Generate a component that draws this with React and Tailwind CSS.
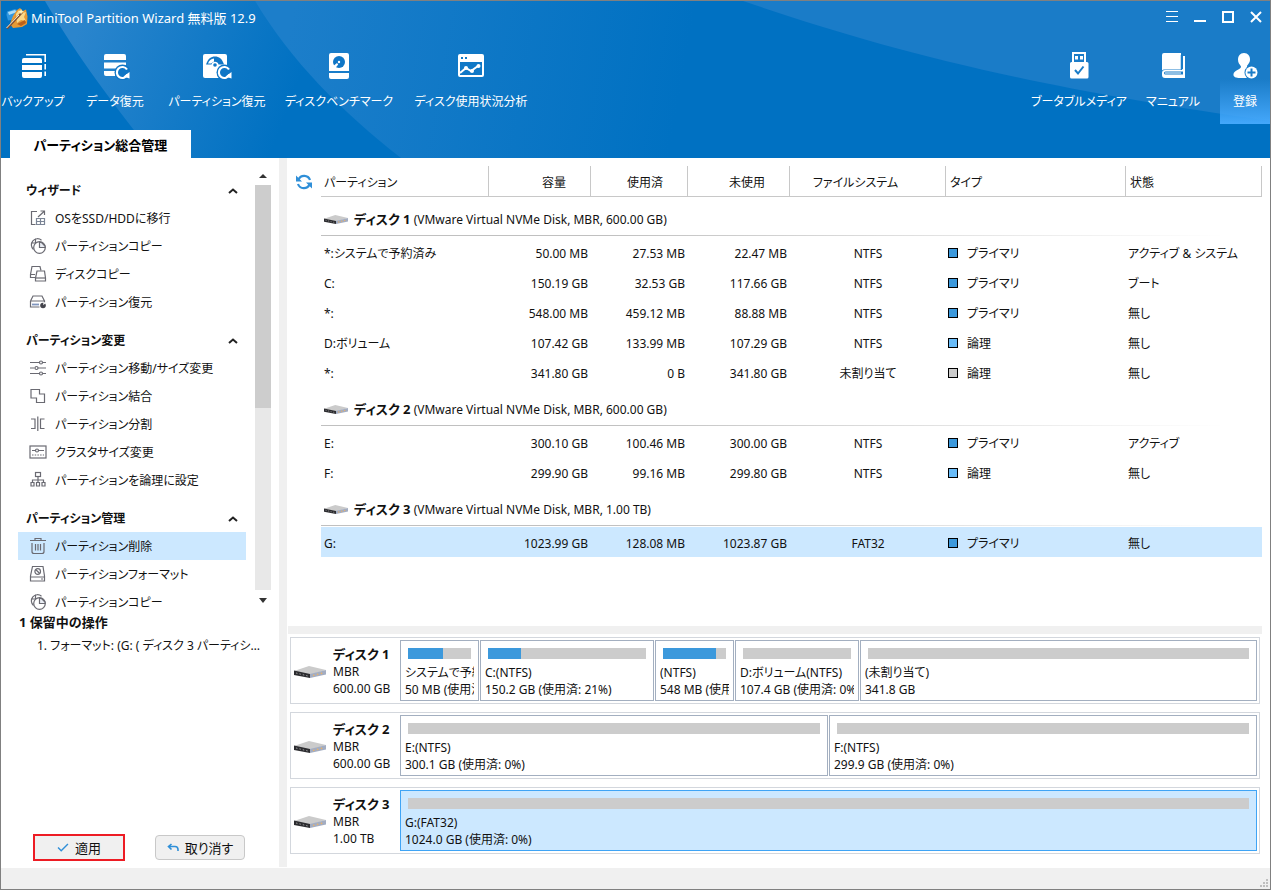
import React, { useState } from 'react';

const PRIMARY = 'bg-[#3c99dc]';
const LOGICAL = 'bg-[#69bcf8]';
const UNALLOCATED = 'bg-[#cccccc]';

const svgProps = { width: 18, height: 18, viewBox: '0 0 18 18', fill: 'none', stroke: '#6a6a72', strokeWidth: 1.2 };

const icons = {
  migrate: (
    <svg {...svgProps}>
      <path d="M8 2.500H2.500v13h4M9 8l6-5.500M11.500 2H15.500v4" />
      <path d="M7.500 9.500h8v6h-8zM11.500 9.500v6M7.500 12.500h8" stroke="#7b8596" />
    </svg>
  ),
  copyPartition: (
    <svg {...svgProps}>
      <path d="M4.500 12.500A6 6 0 1 1 12.500 3.200M6.500 1.500v4.500H2" />
      <circle cx="10.500" cy="10.500" r="5.800" fill="#fff" />
      <path d="M10.500 5.500v5h5.500V9l-3.500-3.500z" fill="#e9edf4" />
    </svg>
  ),
  copyDisk: (
    <svg {...svgProps}>
      <path d="M6 12.500H1.500v-3l1.500-8h8l1 4M1.500 9.500H6" />
      <path d="M8 6h7.500l1 7v3h-10v-3z" />
      <path d="M6.500 13h10" />
    </svg>
  ),
  recover: (
    <svg {...svgProps}>
      <path d="M1.500 8 4 3h9l2.500 5M1.500 8h14v2M1.500 8v6h9" />
      <path d="M3 11.500h7" stroke="#7f95bd" strokeWidth="1.800" />
      <circle cx="14" cy="12.500" r="2.800" fill="#44444c" stroke="none" />
      <path d="M14.300 12.200v-3h3z" fill="#fff" stroke="none" />
    </svg>
  ),
  resize: (
    <svg {...svgProps}>
      <path d="M1 3.500h9.500M13.500 3.500H17M1 9h4.500M9 9h8M1 14.500h9.500M13.500 14.500H17" />
      <circle cx="12" cy="3.500" r="1.500" />
      <circle cx="7.500" cy="9" r="1.500" />
      <circle cx="12" cy="14.500" r="1.500" />
    </svg>
  ),
  merge: (
    <svg {...svgProps}>
      <path d="M2 2.500h8.500V7H15.500v8.500H7.500V11H2z" />
    </svg>
  ),
  split: (
    <svg {...svgProps}>
      <path d="M2 4h4v9.500H2M15.500 4h-4v9.500h4M8.800 1.500v14.500" />
    </svg>
  ),
  cluster: (
    <svg {...svgProps}>
      <rect x="1" y="3" width="16" height="12" />
      <path d="M3 7.500h3M10 7.500h5" />
      <circle cx="8" cy="7.500" r="1.500" />
      <path d="M3 12h12" strokeDasharray="1.500 1.200" />
    </svg>
  ),
  logical: (
    <svg {...svgProps}>
      <rect x="6.500" y="1.500" width="5" height="4" />
      <path d="M9 5.500v4M3.500 11.500v-2.500h11v2.500M9 9v2.500" />
      <path d="M2 11.500h3v3.500H2zM7.500 11.500h3v3.500h-3zM13 11.500h3v3.500h-3z" />
    </svg>
  ),
  trash: (
    <svg {...svgProps}>
      <path d="M1 3.500h16M6 3.500v-2h6v2M3 6v8.500a2 2 0 0 0 2 2h8a2 2 0 0 0 2-2V6M6.500 7v6.500M9 7v6.500M11.500 7v6.500" />
    </svg>
  ),
  format: (
    <svg {...svgProps}>
      <path d="M3.500 1.500h10.500l1.500 9.500v5H1.500v-5zM1.500 12h14M12 14h2" />
      <circle cx="8.700" cy="6.500" r="2.800" />
      <path d="m6.700 4.500 4 4" />
    </svg>
  ),
};

const sections = [
  {
    title: 'ウィザード',
    items: [
      ['migrate', 'OSをSSD/HDDに移行'],
      ['copyPartition', 'パーティションコピー'],
      ['copyDisk', 'ディスクコピー'],
      ['recover', 'パーティション復元'],
    ],
  },
  {
    title: 'パーティション変更',
    items: [
      ['resize', 'パーティション移動/サイズ変更'],
      ['merge', 'パーティション結合'],
      ['split', 'パーティション分割'],
      ['cluster', 'クラスタサイズ変更'],
      ['logical', 'パーティションを論理に設定'],
    ],
  },
  {
    title: 'パーティション管理',
    items: [
      ['trash', 'パーティション削除'],
      ['format', 'パーティションフォーマット'],
      ['copyPartition', 'パーティションコピー'],
    ],
  },
];

const disks = [
  {
    name: 'ディスク 1',
    info: '(VMware Virtual NVMe Disk, MBR, 600.00 GB)',
    size: '600.00 GB',
    rows: [
      ['*:システムで予約済み', '50.00 MB', '27.53 MB', '22.47 MB', 'NTFS', PRIMARY, 'プライマリ', 'アクティブ & システム'],
      ['C:', '150.19 GB', '32.53 GB', '117.66 GB', 'NTFS', PRIMARY, 'プライマリ', 'ブート'],
      ['*:', '548.00 MB', '459.12 MB', '88.88 MB', 'NTFS', PRIMARY, 'プライマリ', '無し'],
      ['D:ボリューム', '107.42 GB', '133.99 MB', '107.29 GB', 'NTFS', LOGICAL, '論理', '無し'],
      ['*:', '341.80 GB', '0 B', '341.80 GB', '未割り当て', UNALLOCATED, '論理', '無し'],
    ],
    blocks: [
      { weight: 79, used: 55, label: 'システムで予約済み(NTFS)', detail: '50 MB (使用済: 55%)' },
      { weight: 174, used: 21, label: 'C:(NTFS)', detail: '150.2 GB (使用済: 21%)' },
      { weight: 79, used: 84, label: '(NTFS)', detail: '548 MB (使用済: 84%)' },
      { weight: 124, used: 0, label: 'D:ボリューム(NTFS)', detail: '107.4 GB (使用済: 0%)' },
      { weight: 397, used: 0, label: '(未割り当て)', detail: '341.8 GB' },
    ],
  },
  {
    name: 'ディスク 2',
    info: '(VMware Virtual NVMe Disk, MBR, 600.00 GB)',
    size: '600.00 GB',
    rows: [
      ['E:', '300.10 GB', '100.46 MB', '300.00 GB', 'NTFS', PRIMARY, 'プライマリ', 'アクティブ'],
      ['F:', '299.90 GB', '99.16 MB', '299.80 GB', 'NTFS', LOGICAL, '論理', '無し'],
    ],
    blocks: [
      { weight: 1, used: 0, label: 'E:(NTFS)', detail: '300.1 GB (使用済: 0%)' },
      { weight: 1, used: 0, label: 'F:(NTFS)', detail: '299.9 GB (使用済: 0%)' },
    ],
  },
  {
    name: 'ディスク 3',
    info: '(VMware Virtual NVMe Disk, MBR, 1.00 TB)',
    size: '1.00 TB',
    rows: [['G:', '1023.99 GB', '128.08 MB', '1023.87 GB', 'FAT32', PRIMARY, 'プライマリ', '無し']],
    blocks: [{ weight: 1, used: 0, label: 'G:(FAT32)', detail: '1024.0 GB (使用済: 0%)', selected: true }],
  },
];

const AppLogo = () => (
  <svg width="24" height="24" viewBox="0 0 24 24" className="shrink-0">
    <path d="M2 5.500 10 3l4 2-2 8-9 1.500L1.500 9z" fill="#2f96e0" />
    <path d="M3 6l7-2 2 2-8 3z" fill="#a9dcf7" />
    <path d="M8 10 12 4l3-2 3 3 3-1.500 1.500 7L22 18l-5 3-9 1-3-4z" fill="#e79a35" />
    <path d="m11 8 3-4 3 3 4-1-2 5 2 4-5-1-4 3z" fill="#fbd98a" />
    <path d="m12 18 8-4 1 3-5 3z" fill="#b9601c" />
    <path d="M2 22.500 17 6.500" stroke="#7d4a2a" strokeWidth="2" />
    <path d="M1.500 22 14 9" stroke="#f4ead8" strokeWidth="1" />
    <path d="m16 3 1 2 2 .5-2 1-1 2-.8-2-2-.8 2-.7z" fill="#fff7c4" />
  </svg>
);

const DriveIcon = ({ width = 32, height = 14 }) => (
  <svg width={width} height={height} viewBox="0 0 32 14" className="shrink-0">
    <path d="M0 6 15 1l17 4-16 5z" fill="#cbcbcb" />
    <path d="M0 5.500l16 3.500v4L0 10z" fill="#2c2c30" />
    <path d="M16 9l16-4v4.500l-16 3.500z" fill="#a3adc2" />
    <path d="M2 8l12 3" stroke="#9a9a9a" strokeWidth="1" strokeDasharray="1.500 2" />
    <path d="M19 10.500l10-2.500" stroke="#e8b26a" strokeWidth="1.500" strokeDasharray="1.500 2.500" />
  </svg>
);

const RefreshIcon = () => (
  <svg width="18" height="18" viewBox="0 0 18 18" fill="none">
    <path d="M3.500 6.500A6.200 6.200 0 0 1 15 7M14.500 11.500A6.200 6.200 0 0 1 3 11" stroke="#2f8fd8" strokeWidth="2.200" />
    <path d="M1 2.500v6h6zM17 15.500v-6h-6z" fill="#2f8fd8" />
  </svg>
);

const BackupIcon = () => (
  <svg width="28" height="28" viewBox="0 0 28 28" fill="#fff">
    <path d="M5 6h16a2 2 0 0 1 2 2v3H3V8a2 2 0 0 1 2-2zM3 13h20v5H3zM3 20h20v4a2 2 0 0 1-2 2H5a2 2 0 0 1-2-2z" />
    <path d="M7 2.800h19.200V10M26.200 12v5.500M26.200 19.500V24" fill="none" stroke="#fff" strokeWidth="1.600" />
  </svg>
);

const ReloadArrow = () => (
  <>
    <circle cx="22.500" cy="20.500" r="8" fill="#0f76c6" />
    <path d="M27 17.500a5.500 5.500 0 1 0 .5 5" fill="none" stroke="#fff" strokeWidth="2.200" />
    <path d="M29.500 20v6.500l-6-2z" fill="#fff" />
  </>
);

const DataRecoveryIcon = () => (
  <svg width="30" height="28" viewBox="0 0 30 28" fill="#fff">
    <path d="M6 2h18a2 2 0 0 1 2 2v4H4V4a2 2 0 0 1 2-2zM4 10.500h22v6H4zM4 19h22v5H6a2 2 0 0 1-2-2z" />
    <ReloadArrow />
  </svg>
);

const PartitionRecoveryIcon = () => (
  <svg width="30" height="28" viewBox="0 0 30 28" fill="#fff">
    <path d="M3 2h20a2 2 0 0 1 2 2v22H3a2 2 0 0 1-2-2V4a2 2 0 0 1 2-2z" />
    <path d="M4 12.500C6 6.500 9 4.500 13 4.500s7 2 9 8h-5.500a3.600 3.600 0 0 0-7 0z" fill="#0f76c6" />
    <path d="m6 11.500c1-3 3-4.500 6-5v3l-3 2z" />
    <circle cx="13" cy="13" r="1.800" fill="#0f76c6" />
    <ReloadArrow />
  </svg>
);

const BenchmarkIcon = () => (
  <svg width="28" height="28" viewBox="0 0 28 28" fill="#fff">
    <path d="M6 1h16a2 2 0 0 1 2 2v16H4V3a2 2 0 0 1 2-2zM4 21h20v4a2 2 0 0 1-2 2H6a2 2 0 0 1-2-2z" />
    <circle cx="14" cy="10" r="6" fill="#0f76c6" />
    <circle cx="14" cy="10" r="1.200" />
    <path d="m7 15 5-4 1.200 1.500-3.200 4z" />
  </svg>
);

const UsageIcon = () => (
  <svg width="28" height="28" viewBox="0 0 28 28">
    <path fill="#fff" fillRule="evenodd" d="M3 2h22a2 2 0 0 1 2 2v19a2 2 0 0 1-2 2H3a2 2 0 0 1-2-2V4a2 2 0 0 1 2-2zm1 3v2h2V5zm4 0v2h2V5zM3 10v13h22V10z" />
    <path d="m3 21 6-5 5 3 7-5" fill="none" stroke="#fff" strokeWidth="2" />
    <circle cx="9" cy="16" r="2" fill="#fff" />
    <circle cx="15" cy="19" r="2" fill="#fff" />
    <circle cx="21.500" cy="14" r="2" fill="#fff" />
  </svg>
);

const UsbIcon = () => (
  <svg width="28" height="28" viewBox="0 0 28 28">
    <path fill="#fff" fillRule="evenodd" d="M7 0h14v10h1a1.500 1.500 0 0 1 1.500 1.500V25a1.500 1.500 0 0 1-1.500 1.500H6.500A1.500 1.500 0 0 1 5 25V11.500A1.500 1.500 0 0 1 6.500 10H7zm2 2v8h10V2zm1 2h3v3.500h-3zm5 0h3v3.500h-3z" />
    <path d="m10 18 3 3.500 5.500-7" fill="none" stroke="#1a7cc8" strokeWidth="2" />
  </svg>
);

const ManualIcon = () => (
  <svg width="28" height="28" viewBox="0 0 28 28">
    <path fill="#fff" d="M5 1h17v16.500H5a3 3 0 0 0-2 1V3a2 2 0 0 1 2-2z" />
    <path fill="#fff" fillRule="evenodd" d="M24 4h2v22H6a3 3 0 0 1-3-3v-2a3 3 0 0 1 3-3h16v-1h2zM6.500 19.500a1.500 1.500 0 0 0 0 3H24v-3z" />
    <path d="M6 21h16" stroke="#fff" strokeWidth="1" />
    <path d="M22.500 3v15" stroke="#1a7cc8" strokeWidth="1.500" />
  </svg>
);

const RegisterIcon = () => (
  <svg width="28" height="28" viewBox="0 0 28 28">
    <path fill="#fff" d="M13 1c4 0 6 3 6 6.500S17 12 16 14c0 3 3 3.500 5 5v7H9c-4 0-7-1-6.500-4C3 18 10 18 10 14.500 8.500 12 7 11 7 7.500S9 1 13 1z" />
    <circle cx="20.500" cy="20.500" r="7" fill="#1a7cc8" />
    <circle cx="20.500" cy="20.500" r="6" fill="#fff" />
    <path d="M16.500 20.500h8M20.500 16.500v8" stroke="#1a7cc8" strokeWidth="2" />
  </svg>
);

const HeaderBackdrop = () => (
  <svg className="absolute inset-0 h-full w-full" viewBox="0 0 1269 157" preserveAspectRatio="none">
    <defs>
      <linearGradient id="beamA" gradientUnits="userSpaceOnUse" x1="80" y1="20" x2="290" y2="100">
        <stop offset="0" stopColor="#2a85cd" />
        <stop offset="1" stopColor="#0071c2" />
      </linearGradient>
      <linearGradient id="beamB" gradientUnits="userSpaceOnUse" x1="290" y1="20" x2="680" y2="90">
        <stop offset="0" stopColor="#1c7eca" />
        <stop offset="1" stopColor="#0071c2" />
      </linearGradient>
    </defs>
    <path d="M44 0C70 45 100 88 155 157H400C340 110 290 60 254 0z" fill="url(#beamA)" />
    <path d="M254 0C290 60 340 110 400 157H760V0z" fill="url(#beamB)" />
    <path d="M742 0C880 47 1020 85 1269 120V0z" fill="#1a7cc8" />
  </svg>
);

const ToolButton = ({ icon, label, width }) => (
  <button className={`flex h-[75px] flex-col items-center gap-3 whitespace-nowrap pt-[3px] text-white ${width}`}>
    {icon}
    <span className="leading-5">{label}</span>
  </button>
);

const Header = () => (
  <header className="relative flex h-[157px] shrink-0 flex-col justify-between overflow-hidden bg-[#0071c2] text-white">
    <HeaderBackdrop />
    <div className="relative flex h-8 items-center justify-between pl-1">
      <h1 className="flex items-center gap-0.5 pt-0.5 text-[13px]">
        <AppLogo />
        MiniTool Partition Wizard 無料版 12.9
      </h1>
      <div className="flex">
        <button aria-label="メニュー" className="grid h-7 w-7 place-items-center">
          <svg width="12" height="12" viewBox="0 0 12 12" stroke="#fff"><path d="M0 .5h12M0 5.500h12M0 10.500h12" /></svg>
        </button>
        <button aria-label="最小化" className="grid h-7 w-7 place-items-center">
          <svg width="12" height="12" viewBox="0 0 12 12" stroke="#fff" strokeWidth="2"><path d="M0 10h12" /></svg>
        </button>
        <button aria-label="最大化" className="grid h-7 w-7 place-items-center">
          <svg width="12" height="12" viewBox="0 0 12 12" fill="none" stroke="#fff" strokeWidth="2"><path d="M1 1h10v10H1z" /></svg>
        </button>
        <button aria-label="閉じる" className="grid h-7 w-7 place-items-center">
          <svg width="12" height="12" viewBox="0 0 12 12" stroke="#fff" strokeWidth="2"><path d="m1 1 10 10M11 1 1 11" /></svg>
        </button>
      </div>
    </div>
    <div className="relative flex flex-1 items-start justify-between pt-4">
      <div className="flex">
        <ToolButton icon={<BackupIcon />} label="バックアップ" width="w-16" />
        <ToolButton icon={<DataRecoveryIcon />} label="データ復元" width="w-[100px]" />
        <ToolButton icon={<PartitionRecoveryIcon />} label="パーティション復元" width="w-[104px]" />
        <ToolButton icon={<BenchmarkIcon />} label="ディスクベンチマーク" width="w-[140px]" />
        <ToolButton icon={<UsageIcon />} label="ディスク使用状況分析" width="w-[124px]" />
      </div>
      <div className="flex">
        <ToolButton icon={<UsbIcon />} label="ブータブルメディア" width="w-[94px]" />
        <ToolButton icon={<ManualIcon />} label="マニュアル" width="w-[94px]" />
        <ToolButton
          icon={<RegisterIcon />}
          label="登録"
          width="w-[50px] bg-linear-to-b from-transparent from-40% to-[#45a8fb]"
        />
      </div>
    </div>
    <div className="relative flex pl-[9px]">
      <button className="h-7 w-[181px] bg-white pt-0.5 text-[13px] font-bold leading-5 text-black">パーティション総合管理</button>
    </div>
  </header>
);

const Sidebar = ({ selected, onSelect }) => (
  <aside className="flex w-[278px] shrink-0 flex-col">
    <div className="flex min-h-0 flex-1 pl-[17px] pr-2 pt-2.5">
      <nav className="min-w-0 flex-1 overflow-hidden pr-[9px] pt-2">
        {sections.map((section) => (
          <div key={section.title} className="mb-[10px]">
            <button className="flex h-7 w-full items-center justify-between pl-2 pr-2 pt-0.5 font-bold">
              {section.title}
              <svg width="10" height="6" viewBox="0 0 10 6" fill="none" stroke="#222" strokeWidth="2"><path d="m1 5 4-3.500L9 5" /></svg>
            </button>
            <ul>
              {section.items.map(([icon, label]) => {
                const key = section.title + label;
                return (
                  <li key={key}>
                    <button
                      onClick={() => onSelect(key)}
                      className={`flex h-7 w-full items-center gap-2 whitespace-nowrap pl-[11px] ${selected === key ? 'bg-[#cce8ff]' : ''}`}
                    >
                      {icons[icon]}
                      <span className="pt-0.5">{label}</span>
                    </button>
                  </li>
                );
              })}
            </ul>
          </div>
        ))}
      </nav>
      <div className="flex w-4 shrink-0 flex-col">
        <span className="grid h-[17px] place-items-center">
          <svg width="8" height="5" viewBox="0 0 8 5"><path d="M4 0 8 4H0z" fill="#333" /></svg>
        </span>
        <div className="flex-1 bg-[#e8e8e8]">
          <div className="h-[55%] bg-[#cdcdcd]" />
        </div>
        <span className="grid h-5 place-items-center">
          <svg width="8" height="5" viewBox="0 0 8 5"><path d="M4 5 8 0H0z" fill="#333" /></svg>
        </span>
      </div>
    </div>
    <div className="flex h-[258px] shrink-0 flex-col justify-between pb-[7px]">
      <div className="pl-[18px] pr-4">
        <h2 className="text-[13px] font-bold leading-6">1 保留中の操作</h2>
        <p className="truncate pl-[18px] leading-6">1. フォーマット: (G: ( ディスク 3 パーティション 1 ))</p>
      </div>
      <div className="flex items-center gap-[30px] pl-8">
        <button className="flex h-[27px] w-[92px] items-center justify-center gap-1.5 border-2 border-[#ed1c24] bg-[#f0f0f0] text-[13px]">
          <svg width="12" height="9" viewBox="0 0 13 10" fill="none" stroke="#2f8fd8" strokeWidth="1.600"><path d="m1 5 3.500 3.500L12 1" /></svg>
          適用
        </button>
        <button className="flex h-[25px] w-[90px] items-center justify-center gap-1.5 rounded-sm border border-[#c8c8c8] bg-[#f0f0f0] text-[13px]">
          <svg width="12" height="10" viewBox="0 0 12 10" fill="none" stroke="#2f8fd8" strokeWidth="1.600"><path d="M4.500 1 1.500 3.500l3 3M1.500 3.500H8a3 3 0 0 1 3 3V8" /></svg>
          取り消す
        </button>
      </div>
    </div>
  </aside>
);

const PartitionTable = () => (
  <div className="flex min-h-0 flex-1 overflow-hidden pr-2 pt-2">
    <button aria-label="更新" className="grid h-[31px] w-[34px] shrink-0 place-items-center">
      <RefreshIcon />
    </button>
    <div className="min-w-0 flex-1">
      <table className="w-full table-fixed border-separate border-spacing-0">
        <colgroup>
          <col className="w-[168px]" />
          <col className="w-[102px]" />
          <col className="w-[97px]" />
          <col className="w-[102px]" />
          <col className="w-[156px]" />
          <col className="w-[180px]" />
          <col />
        </colgroup>
        <thead>
          <tr className="h-[31px] [&>th]:border-b [&>th]:border-r [&>th]:border-[#c8c8c8] [&>th]:p-0 [&>th]:pt-[3px] [&>th]:font-normal">
            <th className="text-left"><span className="pl-[3px]">パーティション</span></th>
            <th className="text-right"><span className="pr-6">容量</span></th>
            <th className="text-right"><span className="pr-6">使用済</span></th>
            <th className="text-right"><span className="pr-6">未使用</span></th>
            <th className="text-center"><span className="pr-6">ファイルシステム</span></th>
            <th className="text-left"><span className="pl-1">タイプ</span></th>
            <th className="text-left"><span className="pl-1">状態</span></th>
          </tr>
        </thead>
        {disks.map((disk) => (
          <tbody key={disk.name}>
            <tr>
              <td colSpan={7} className="p-0 pb-px">
                <div className="flex h-[38px] items-center gap-1.5 pl-[3px] pt-1.5">
                  <DriveIcon width={24} height={11} />
                  <span>
                    <b className="text-[13px]">{disk.name}</b> {disk.info}
                  </span>
                </div>
                <div className="h-px bg-linear-to-r from-[#c0c0c0] from-30% to-transparent to-[96%]" />
              </td>
            </tr>
            {disk.rows.map(([name, size, used, free, fs, color, type, status], index) => (
              <tr key={index} className={`h-[30px] [&>td]:whitespace-nowrap [&>td]:p-0 [&>td]:pt-[3px] ${name === 'G:' ? 'bg-[#cce8ff]' : ''}`}>
                <td><span className="pl-[3px]">{name}</span></td>
                <td className="text-right"><span className="pr-[3px]">{size}</span></td>
                <td className="text-right"><span className="pr-[3px]">{used}</span></td>
                <td className="text-right"><span className="pr-[3px]">{free}</span></td>
                <td className="text-center">{fs}</td>
                <td>
                  <span className="flex items-center gap-[9px] pl-0.5">
                    <span className={`mb-0.5 h-2.5 w-2.5 border border-black ${color}`} />
                    {type}
                  </span>
                </td>
                <td><span className="pl-0.5">{status}</span></td>
              </tr>
            ))}
          </tbody>
        ))}
      </table>
    </div>
  </div>
);

const DiskMap = () => (
  <div className="flex shrink-0 flex-col gap-2 pb-[14px] pl-[3px] pr-[10px] pt-[3px]">
    {disks.map((disk) => (
      <div key={disk.name} className="flex h-[67px] border border-[#d3d7dd] p-0.5 leading-[17px]">
        <div className="flex w-[107px] shrink-0 items-center gap-[7px] pl-px pt-0.5">
          <DriveIcon />
          <div className="whitespace-nowrap">
            <b className="block text-[13px]">{disk.name}</b>
            <span className="block">MBR</span>
            <span className="block">{disk.size}</span>
          </div>
        </div>
        <div
          className="grid min-w-0 flex-1 gap-px"
          style={{ gridTemplateColumns: disk.blocks.map((block) => `minmax(0, ${block.weight}fr)`).join(' ') }}
        >
          {disk.blocks.map((block) => (
            <div
              key={block.label}
              className={`border px-1 pt-[7px] ${block.selected ? 'border-[#3fa4f5] bg-[#cce8ff]' : 'border-[#a3afc0] bg-white'}`}
            >
              <div className="mx-[3px] h-[11px] bg-[#cccccc]">
                <div className="h-full bg-[#3c99dc]" style={{ width: `${block.used}%` }} />
              </div>
              <div className="mt-[5px] overflow-hidden whitespace-nowrap">
                <span className="block">{block.label}</span>
                <span className="block">{block.detail}</span>
              </div>
            </div>
          ))}
        </div>
      </div>
    ))}
  </div>
);

export default function App() {
  const [selected, setSelected] = useState('パーティション管理パーティション削除');

  return (
    <div className="flex h-screen flex-col overflow-hidden border border-[#808080] bg-white font-['Noto_Sans','Noto_Sans_CJK_JP',sans-serif] text-[12px] leading-5 text-[#111] [font-feature-settings:'palt']">
      <Header />
      <div className="flex min-h-0 flex-1">
        <Sidebar selected={selected} onSelect={setSelected} />
        <div className="mb-px w-2 shrink-0 bg-[#f0f0f0]" />
        <main className="flex min-w-0 flex-1 flex-col">
          <PartitionTable />
          <div className="ml-px mr-2 h-2 shrink-0 bg-[#f0f0f0]" />
          <DiskMap />
        </main>
      </div>
      <footer className="flex h-[21px] shrink-0 items-end justify-end bg-[#f0f0f0] p-0.5">
        <svg width="8" height="8" viewBox="0 0 8 8" fill="#bfbfbf"><path d="M6 0h2v2H6zM3 3h2v2H3zM6 3h2v2H6zM0 6h2v2H0zM3 6h2v2H3zM6 6h2v2H6z" /></svg>
      </footer>
    </div>
  );
}
